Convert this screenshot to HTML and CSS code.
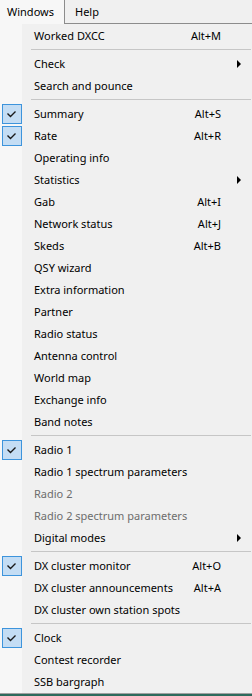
FILE: index.html
```html
<!DOCTYPE html>
<html>
<head>
<meta charset="utf-8">
<link rel="stylesheet" href="styles.css">
</head>
<body>
<div class="menubar">
  <div class="mb-item open">Windows</div>
  <div class="mb-rest"><span class="mb-help">Help</span></div>
</div>
<div class="menu">
  <div class="row"><span class="gut"></span><span class="lbl">Worked DXCC</span><span class="key">Alt+M</span><span class="end"></span></div>
  <div class="sep"></div>
  <div class="row"><span class="gut"></span><span class="lbl">Check</span><span class="key"></span><span class="end"><span class="arrow"></span></span></div>
  <div class="row"><span class="gut"></span><span class="lbl">Search and pounce</span><span class="key"></span><span class="end"></span></div>
  <div class="sep"></div>
  <div class="row"><span class="gut"><span class="chk"><svg width="18" height="18" viewBox="0 0 18 18"><polyline points="4.5,8.5 7.5,11.5 12.5,6.5" fill="none" stroke="#1a1a1a" stroke-width="1.4"/></svg></span></span><span class="lbl">Summary</span><span class="key">Alt+S</span><span class="end"></span></div>
  <div class="row"><span class="gut"><span class="chk"><svg width="18" height="18" viewBox="0 0 18 18"><polyline points="4.5,8.5 7.5,11.5 12.5,6.5" fill="none" stroke="#1a1a1a" stroke-width="1.4"/></svg></span></span><span class="lbl">Rate</span><span class="key">Alt+R</span><span class="end"></span></div>
  <div class="row"><span class="gut"></span><span class="lbl">Operating info</span><span class="key"></span><span class="end"></span></div>
  <div class="row"><span class="gut"></span><span class="lbl">Statistics</span><span class="key"></span><span class="end"><span class="arrow"></span></span></div>
  <div class="row"><span class="gut"></span><span class="lbl">Gab</span><span class="key">Alt+I</span><span class="end"></span></div>
  <div class="row"><span class="gut"></span><span class="lbl">Network status</span><span class="key">Alt+J</span><span class="end"></span></div>
  <div class="row"><span class="gut"></span><span class="lbl">Skeds</span><span class="key">Alt+B</span><span class="end"></span></div>
  <div class="row"><span class="gut"></span><span class="lbl">QSY wizard</span><span class="key"></span><span class="end"></span></div>
  <div class="row"><span class="gut"></span><span class="lbl">Extra information</span><span class="key"></span><span class="end"></span></div>
  <div class="row"><span class="gut"></span><span class="lbl">Partner</span><span class="key"></span><span class="end"></span></div>
  <div class="row"><span class="gut"></span><span class="lbl">Radio status</span><span class="key"></span><span class="end"></span></div>
  <div class="row"><span class="gut"></span><span class="lbl">Antenna control</span><span class="key"></span><span class="end"></span></div>
  <div class="row"><span class="gut"></span><span class="lbl">World map</span><span class="key"></span><span class="end"></span></div>
  <div class="row"><span class="gut"></span><span class="lbl">Exchange info</span><span class="key"></span><span class="end"></span></div>
  <div class="row"><span class="gut"></span><span class="lbl">Band notes</span><span class="key"></span><span class="end"></span></div>
  <div class="sep"></div>
  <div class="row"><span class="gut"><span class="chk"><svg width="18" height="18" viewBox="0 0 18 18"><polyline points="4.5,8.5 7.5,11.5 12.5,6.5" fill="none" stroke="#1a1a1a" stroke-width="1.4"/></svg></span></span><span class="lbl">Radio 1</span><span class="key"></span><span class="end"></span></div>
  <div class="row"><span class="gut"></span><span class="lbl">Radio 1 spectrum parameters</span><span class="key"></span><span class="end"></span></div>
  <div class="row disabled"><span class="gut"></span><span class="lbl">Radio 2</span><span class="key"></span><span class="end"></span></div>
  <div class="row disabled"><span class="gut"></span><span class="lbl">Radio 2 spectrum parameters</span><span class="key"></span><span class="end"></span></div>
  <div class="row"><span class="gut"></span><span class="lbl">Digital modes</span><span class="key"></span><span class="end"><span class="arrow"></span></span></div>
  <div class="sep"></div>
  <div class="row"><span class="gut"><span class="chk"><svg width="18" height="18" viewBox="0 0 18 18"><polyline points="4.5,8.5 7.5,11.5 12.5,6.5" fill="none" stroke="#1a1a1a" stroke-width="1.4"/></svg></span></span><span class="lbl">DX cluster monitor</span><span class="key">Alt+O</span><span class="end"></span></div>
  <div class="row"><span class="gut"></span><span class="lbl">DX cluster announcements</span><span class="key">Alt+A</span><span class="end"></span></div>
  <div class="row"><span class="gut"></span><span class="lbl">DX cluster own station spots</span><span class="key"></span><span class="end"></span></div>
  <div class="sep"></div>
  <div class="row"><span class="gut"><span class="chk"><svg width="18" height="18" viewBox="0 0 18 18"><polyline points="4.5,8.5 7.5,11.5 12.5,6.5" fill="none" stroke="#1a1a1a" stroke-width="1.4"/></svg></span></span><span class="lbl">Clock</span><span class="key"></span><span class="end"></span></div>
  <div class="row"><span class="gut"></span><span class="lbl">Contest recorder</span><span class="key"></span><span class="end"></span></div>
  <div class="row"><span class="gut"></span><span class="lbl">SSB bargraph</span><span class="key"></span><span class="end"></span></div>
</div>
<div class="under"></div>
</body>
</html>
```
FILE: styles.css
```css
html, body {
  margin: 0;
  padding: 0;
  background: #f0f0f0;
}
body {
  width: 252px;
  height: 696px;
  overflow: hidden;
  font-family: "Noto Sans", sans-serif;
  font-size: 11px;
  color: #000;
}
.menubar {
  display: flex;
  height: 24px;
}
.mb-item.open {
  width: 65px;
  height: 24px;
  box-sizing: border-box;
  padding-left: 7px;
  line-height: 23px;
  background: #f7f7f7;
  border-right: 1px solid #8c8c8c;
}
.mb-rest {
  flex: 1;
  border-bottom: 1px solid #8c8c8c;
  background: #f0f0f0;
  line-height: 23px;
  padding-left: 10px;
}
.menu {
  background: linear-gradient(to right, #f7f7f7 22px, #f0f0f0 22px);
  padding-top: 1px;
  border-bottom: 1px solid #a0a0a0;
}
.row {
  display: grid;
  grid-template-columns: 22px 1fr auto 31px;
  align-items: center;
  height: 22px;
  white-space: nowrap;
}
.gut {
  height: 22px;
  display: flex;
  align-items: center;
}
.chk {
  margin-left: 2px;
  width: 20px;
  height: 20px;
  box-sizing: border-box;
  background: #c4ddf4;
  border: 1px solid #3d94dc;
  display: flex;
}
.lbl {
  padding-left: 12px;
  padding-bottom: 2px;
}
.key {
  text-align: right;
  padding-bottom: 2px;
}
.end {
  position: relative;
  height: 22px;
}
.arrow {
  position: absolute;
  left: 16px;
  top: 7px;
  width: 0;
  height: 0;
  border-top: 4px solid transparent;
  border-bottom: 4px solid transparent;
  border-left: 4px solid #000;
}
.disabled {
  color: #6d6d6d;
}
.sep {
  height: 6px;
  position: relative;
}
.sep::after {
  content: "";
  position: absolute;
  left: 31px;
  right: 1px;
  top: 2px;
  height: 1px;
  background: #c6c6c6;
}
.under {
  height: 2px;
  background: #2e6a5c;
}
```
